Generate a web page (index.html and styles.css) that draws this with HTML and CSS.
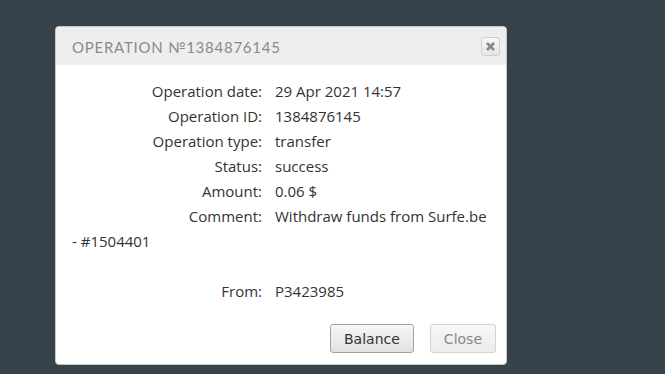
FILE: index.html
```html
<!DOCTYPE html>
<html lang="en">
<head>
    <meta charset="UTF-8">
    <title>Operation</title>
    <link rel="stylesheet" href="styles.css">
</head>
<body>
    <div class="dialog">
        <div class="dialog-title">
            <span class="title-text">Operation №1384876145</span>
            <button class="title-close" title="Close">
                <svg width="11" height="11" viewBox="0 0 11 11">
                    <path d="M2 2 L9 9 M9 2 L2 9" stroke="#888" stroke-width="2.6" stroke-linecap="butt"/>
                </svg>
            </button>
        </div>

        <div class="dialog-content">
            <div class="row"><span class="label">Operation date:</span>29 Apr 2021 14:57</div>
            <div class="row"><span class="label">Operation ID:</span>1384876145</div>
            <div class="row"><span class="label">Operation type:</span>transfer</div>
            <div class="row"><span class="label">Status:</span>success</div>
            <div class="row"><span class="label">Amount:</span>0.06 $</div>
            <div class="row"><span class="label">Comment:</span>Withdraw funds from Surfe.be - #1504401<br><br></div>
            <div class="row"><span class="label">From:</span>P3423985</div>
        </div>

        <div class="dialog-buttons">
            <button class="btn">Balance</button>
            <button class="btn btn-light">Close</button>
        </div>
    </div>
</body>
</html>
```

FILE: styles.css
```css
body {
    margin: 0;
    background-color: #36434b;
    font-family: "Open Sans", Arial, sans-serif;
}
.dialog {
    width: 450px;
    margin: 26px 0 0 55px;
    background: #fff;
    border: 1px solid #c8c8c8;
    border-radius: 4px;
    overflow: hidden;
}
.dialog-title {
    height: 38px;
    background: #eeeeee;
    display: flex;
    align-items: center;
    justify-content: space-between;
    padding: 0 6px 0 16px;
}
.title-text {
    font-family: Lato, "Open Sans", sans-serif;
    text-transform: uppercase;
    font-size: 15px;
    letter-spacing: 0.75px;
    color: #8a8a8a;
    margin-top: 1px;
}
.title-close {
    width: 19px;
    height: 19px;
    padding: 0;
    border: 1px solid #cfcfcf;
    border-radius: 3px;
    background: linear-gradient(#f6f6f6, #e6e6e6);
    display: flex;
    align-items: center;
    justify-content: center;
}
.dialog-content {
    padding: 14px 16px 0 16px;
    font-size: 15px;
    line-height: 25px;
    color: #333;
}
.label {
    display: inline-block;
    width: 190px;
    text-align: right;
    margin-right: 13px;
}
.dialog-buttons {
    display: flex;
    justify-content: flex-end;
    gap: 16px;
    padding: 20px 10px 11px 0;
}
.btn {
    font-family: "DejaVu Sans", Verdana, sans-serif;
    font-size: 14px;
    height: 29px;
    padding: 0 13px;
    color: #333;
    border: 1px solid #a3a3a3;
    border-radius: 3px;
    background: linear-gradient(#f6f6f6, #e2e2e2);
}
.btn-light {
    color: #888;
    border-color: #d3d3d3;
    background: linear-gradient(#f7f7f7, #ececec);
}
```
